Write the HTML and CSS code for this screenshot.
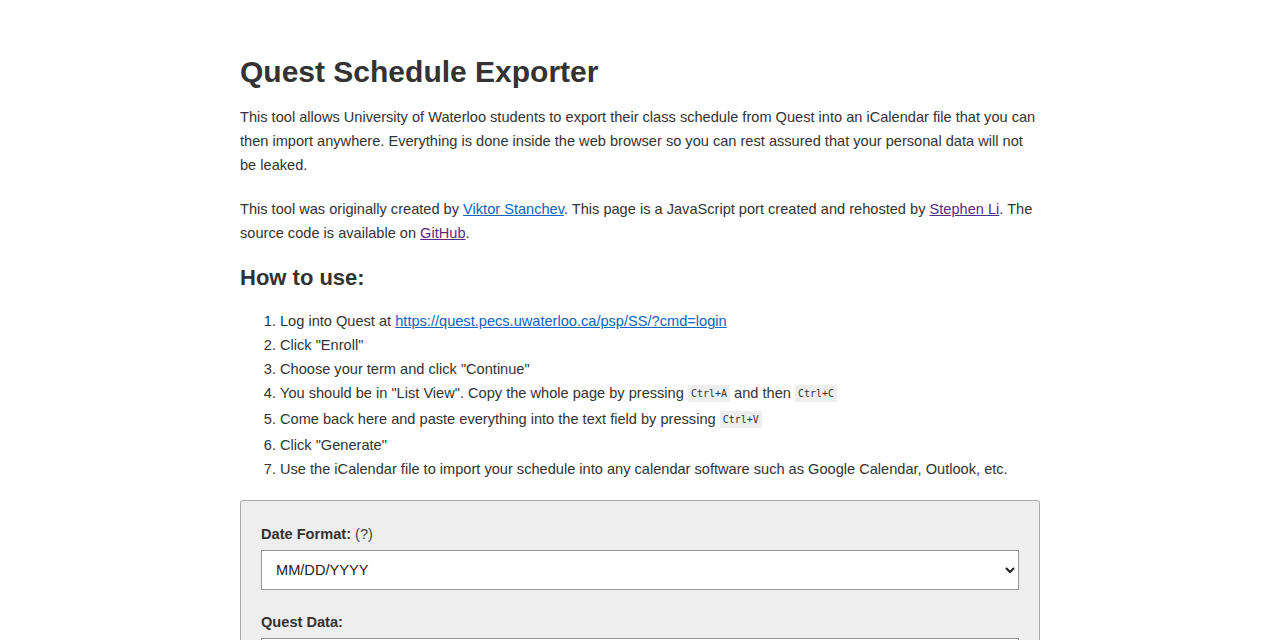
FILE: index.html
```html
<!DOCTYPE html>
<html lang="en">
<head>
  <meta charset="UTF-8">
  <title>Quest Schedule Exporter</title>
  <meta name="viewport" content="width=device-width, initial-scale=1.0">
  <link rel="stylesheet" href="styles.css">
</head>
<body>

  <div class="container">
    <h1>Quest Schedule Exporter</h1>
    <p>This tool allows University of Waterloo students to export their class schedule from Quest into an iCalendar file that you can then import anywhere. Everything is done inside the web browser so you can rest assured that your personal data will not be leaked.</p>
    <p>This tool was originally created by <a href="#" class="link">Viktor Stanchev</a>. This page is a JavaScript port created and rehosted by <a href="#" class="visited">Stephen Li</a>. The source code is available on <a href="#" class="visited">GitHub</a>.</p>

    <h2>How to use:</h2>
    <ol class="steps">
      <li>Log into Quest at <a href="#" class="link">https://quest.pecs.uwaterloo.ca/psp/SS/?cmd=login</a></li>
      <li>Click "Enroll"</li>
      <li>Choose your term and click "Continue"</li>
      <li>You should be in "List View". Copy the whole page by pressing <code>Ctrl+A</code> and then <code>Ctrl+C</code></li>
      <li>Come back here and paste everything into the text field by pressing <code>Ctrl+V</code></li>
      <li>Click "Generate"</li>
      <li>Use the iCalendar file to import your schedule into any calendar software such as Google Calendar, Outlook, etc.</li>
    </ol>

    <form class="panel">
      <label class="field-label" for="dateFormat">Date Format: <span class="hint">(?)</span></label>
      <select id="dateFormat" class="field">
        <option>MM/DD/YYYY</option>
        <option>DD/MM/YYYY</option>
      </select>

      <label class="field-label" for="questData">Quest Data:</label>
      <textarea id="questData" class="field data"></textarea>
    </form>
  </div>

</body>
</html>
```

FILE: styles.css
```css
body {
  margin: 0;
  font-family: 'Liberation Sans', Arial, sans-serif;
  font-size: 14.6px;
  line-height: 24px;
  color: #333;
  background: #fff;
}

.container {
  width: 800px;
  margin: 0 auto;
  padding-top: 54px;
}

h1 {
  font-size: 30px;
  line-height: 36px;
  margin: 0 0 15px;
}

p {
  margin: 0 0 20px;
}

h2 {
  font-size: 22px;
  line-height: 26px;
  margin: 17px 0 18px;
}

.link {
  color: #0b64c0;
}

.visited {
  color: #5b2a86;
}

.steps {
  margin: 0 0 19px;
  padding-left: 40px;
}

code {
  display: inline-block;
  font-family: 'DejaVu Sans Mono', monospace;
  font-size: 10px;
  line-height: 15px;
  background: #eee;
  padding: 1px 3px;
  margin-bottom: 5px;
  vertical-align: 1px;
}

.panel {
  background: #eee;
  border: 1px solid #aaa;
  border-radius: 3px;
  padding: 21px 20px 20px;
}

.field-label {
  display: block;
  font-weight: bold;
  margin-bottom: 4px;
}

.hint {
  font-weight: normal;
  color: #444;
}

.field {
  display: block;
  width: 100%;
  box-sizing: border-box;
  border: 1px solid #999;
  background: #fff;
  font-family: inherit;
  font-size: 14.6px;
  color: #222;
  margin-bottom: 20px;
}

select.field {
  height: 40px;
  padding: 0 10px 0 10px;
  border-radius: 0;
}

.data {
  height: 200px;
  resize: vertical;
}
```
